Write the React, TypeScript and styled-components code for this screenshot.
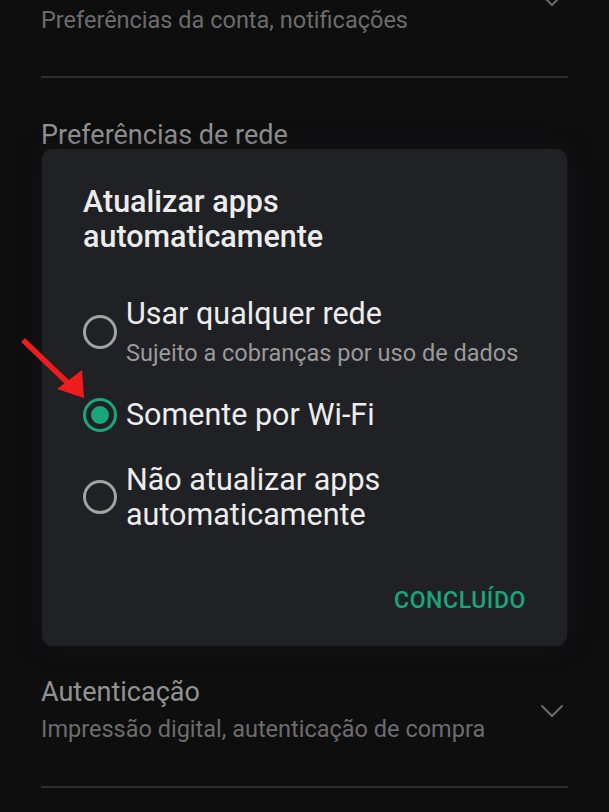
import styled, { createGlobalStyle } from "styled-components";

const GlobalStyle = createGlobalStyle`
  html, body {
    margin: 0;
    padding: 0;
    background: #0e0e0f;
  }
  body {
    font-family: Roboto, "Noto Sans", Arial, sans-serif;
  }
`

type Option = {
  label: string[];
  hint?: string;
  checked?: boolean;
};

const options: Option[] = [
  { label: ["Usar qualquer rede"], hint: "Sujeito a cobranças por uso de dados" },
  { label: ["Somente por Wi-Fi"], checked: true },
  { label: ["Não atualizar apps", "automaticamente"] },
];

function Chevron() {
  return <svg width="24" height="14" viewBox="0 0 24 14">
    <path d="M1.5 1.5 L12 12 L22.5 1.5" fill="none" stroke="#6b6b6b" strokeWidth="2" />
  </svg>
}

function App() {
  return <Screen>
    <GlobalStyle />
    <Settings>
      <Section top={3}>
        <SectionText>
          <SectionHint>Preferências da conta, notificações</SectionHint>
        </SectionText>
        <ChevronSlot shift={-40}><Chevron /></ChevronSlot>
      </Section>
      <Divider top={39} />
      <SectionTitle top={39}>Preferências de rede</SectionTitle>
      {/* rest of the list sits behind the dialog */}
      <Covered />
      <Section>
        <SectionText>
          <SectionTitle>Autenticação</SectionTitle>
          <SectionHint tall>Impressão digital, autenticação de compra</SectionHint>
        </SectionText>
        <ChevronSlot shift={0}><Chevron /></ChevronSlot>
      </Section>
      <Divider top={38} />
    </Settings>

    <Dialog>
      <DialogTitle>Atualizar apps<br />automaticamente</DialogTitle>
      <OptionList>
        {options.map((o, i) => (
          <OptionRow key={i}>
            <Radio checked={!!o.checked} />
            <OptionText>
              {o.label.map((l, j) => <OptionLabel key={j}>{l}</OptionLabel>)}
              {o.hint && <OptionHint>{o.hint}</OptionHint>}
            </OptionText>
          </OptionRow>
        ))}
      </OptionList>
      <Actions>
        <DoneButton>CONCLUÍDO</DoneButton>
      </Actions>
    </Dialog>

    <Arrow viewBox="0 0 80 80" width="80" height="80">
      <line x1="4" y1="4" x2="50" y2="48" stroke="#ee1c1c" strokeWidth="5.5" strokeLinecap="butt" />
      <polygon points="38,53 63,34 65,62" fill="#ee1c1c" />
    </Arrow>
  </Screen>
}

export default App;

const Screen = styled.div`
  position: relative;
  width: 609px;
  height: 812px;
  overflow: hidden;
  background: #0e0e0f;
`

const Settings = styled.div`
  display: flex;
  flex-direction: column;
  padding: 0 41px;
`

const Section = styled.div<{ top?: number }>`
  display: flex;
  align-items: center;
  justify-content: space-between;
  margin-top: ${p => p.top ?? 0}px;
`

const SectionText = styled.div`
  display: flex;
  flex-direction: column;
`

const SectionTitle = styled.div<{ top?: number }>`
  font-size: 27px;
  line-height: 36px;
  color: #929292;
  margin-top: ${p => p.top ?? 0}px;
`

const SectionHint = styled.div<{ tall?: boolean }>`
  font-size: 23.5px;
  line-height: ${p => p.tall ? 38 : 34}px;
  color: #6c6c6c;
  white-space: nowrap;
`

const ChevronSlot = styled.div<{ shift: number }>`
  display: flex;
  margin-right: 4px;
  margin-top: ${p => p.shift}px;
`

const Divider = styled.div<{ top: number }>`
  height: 2px;
  background: #2e2e30;
  margin-top: ${p => p.top}px;
`

const Covered = styled.div`
  height: 521px;
`

const Dialog = styled.div`
  position: absolute;
  left: 42px;
  top: 149px;
  width: 525px;
  box-sizing: border-box;
  padding: 35px 41px 33px 41px;
  background: #202124;
  border-radius: 11px;
  box-shadow: 0 0 22px rgba(28, 28, 32, 0.55);
  display: flex;
  flex-direction: column;
`

const DialogTitle = styled.div`
  font-size: 30.5px;
  font-weight: 500;
  line-height: 35px;
  color: #ececec;
`

const OptionList = styled.div`
  display: flex;
  flex-direction: column;
  gap: 30px;
  margin-top: 42px;
`

const OptionRow = styled.div`
  display: flex;
  align-items: center;
  gap: 9px;
`

const Radio = styled.div<{ checked: boolean }>`
  flex: none;
  width: 34px;
  height: 34px;
  box-sizing: border-box;
  border-radius: 50%;
  border: 3.5px solid ${p => p.checked ? "#19a77a" : "#a3a3a3"};
  display: flex;
  align-items: center;
  justify-content: center;
  &::after {
    content: "";
    display: ${p => p.checked ? "block" : "none"};
    width: 18px;
    height: 18px;
    border-radius: 50%;
    background: #19a77a;
  }
`

const OptionText = styled.div`
  display: flex;
  flex-direction: column;
`

const OptionLabel = styled.div`
  font-size: 30.5px;
  line-height: 35px;
  color: #ededed;
  white-space: nowrap;
`

const OptionHint = styled.div`
  font-size: 23.5px;
  line-height: 28px;
  color: #9a9a9a;
  margin-top: 8px;
  white-space: nowrap;
`

const Actions = styled.div`
  display: flex;
  justify-content: flex-end;
  margin-top: 57px;
`

const DoneButton = styled.div`
  font-size: 23px;
  font-weight: 500;
  line-height: 24px;
  letter-spacing: 0.6px;
  color: #19a77a;
`

const Arrow = styled.svg`
  position: absolute;
  left: 19px;
  top: 336px;
`
